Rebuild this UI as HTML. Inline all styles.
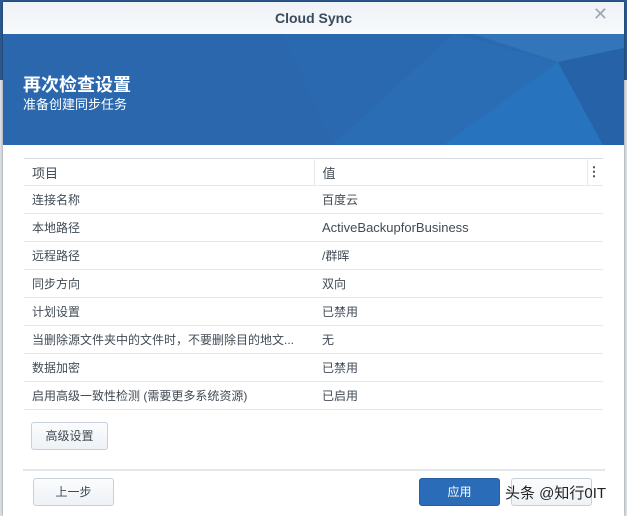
<!DOCTYPE html><html><head><meta charset="utf-8"><style>
*{margin:0;padding:0;box-sizing:border-box}
body{width:627px;height:516px;overflow:hidden;background:#dfe3e8;font-family:"Liberation Sans","Noto Sans CJK SC",sans-serif;position:relative}
.bgtop{position:absolute;left:0;top:0;width:627px;height:80px;background:#2d5a93}
.dlg{position:absolute;left:3px;top:2px;width:621px;height:514px;background:#fff;box-shadow:0 0 3px rgba(0,0,0,.4)}
.tb{height:32px;background:linear-gradient(#eef2f6,#f8fafc);text-align:center;font:bold 14px "Liberation Sans",sans-serif;color:#3a4a5c;line-height:32px;position:relative}
.x{position:absolute;right:16px;top:2px;font:300 18px "DejaVu Sans",sans-serif;color:#a0a8b0}
.ban{height:111px;position:relative;overflow:hidden;background:#2b67ad}
.ban h1{position:absolute;left:20px;top:37px;color:#fff;font-size:18px;font-weight:bold}
.ban p{position:absolute;left:20px;top:60px;color:#fff;font-size:13px}
table{position:absolute;left:21px;top:156px;width:579px;border-collapse:collapse;font-size:12px;color:#414b55}
td{height:28px;border-bottom:1px solid #e6e9ec;padding-left:8px}
tr:first-child td{border-top:1px solid #d8dde2;height:27px;font-size:13px}
.en{font-size:13px}
.b{position:absolute;border:1px solid #c7d0da;border-radius:3px;background:linear-gradient(#fbfcfd,#eef2f6);font-size:12px;color:#414b55;text-align:center}
</style></head><body>
<div class="bgtop"></div>
<div class="dlg">
<div class="tb">Cloud Sync<span class="x">✕</span></div>
<div class="ban">
<svg width="621" height="111" style="position:absolute;left:0;top:0">
<polygon points="280,0 621,0 621,111 330,111" fill="#2a69b0"/>
<polygon points="450,0 555,28 440,111 330,111" fill="#2a6db4"/>
<polygon points="470,0 621,0 621,14 555,28" fill="#3478ba" opacity=".8"/>
<polygon points="555,28 600,111 440,111" fill="#2873bd"/>
<polygon points="555,28 621,14 621,111 600,111" fill="#2562a8"/>
</svg>
<h1>再次检查设置</h1><p>准备创建同步任务</p></div>
<table>
<tr><td style="width:290px;border-right:1px solid #e6e9ec">项目</td><td style="border-right:1px solid #e6e9ec">值</td><td style="width:16px;padding:0;font-weight:bold">⋮</td></tr>
<tr><td>连接名称</td><td colspan="2">百度云</td></tr>
<tr><td>本地路径</td><td colspan="2" class="en">ActiveBackupforBusiness</td></tr>
<tr><td>远程路径</td><td colspan="2">/群晖</td></tr>
<tr><td>同步方向</td><td colspan="2">双向</td></tr>
<tr><td>计划设置</td><td colspan="2">已禁用</td></tr>
<tr><td>当删除源文件夹中的文件时，不要删除目的地文...</td><td colspan="2">无</td></tr>
<tr><td>数据加密</td><td colspan="2">已禁用</td></tr>
<tr><td>启用高级一致性检测 (需要更多系统资源)</td><td colspan="2">已启用</td></tr>
</table>
<div class="b" style="left:28px;top:420px;width:77px;height:28px;line-height:26px">高级设置</div>
<div style="position:absolute;left:20px;top:467px;width:582px;height:2px;background:#e3e7eb"></div>
<div class="b" style="left:30px;top:476px;width:81px;height:28px;line-height:26px">上一步</div>
<div class="b" style="left:416px;top:476px;width:81px;height:28px;line-height:26px;background:#2b6cb8;border-color:#255ea3;color:#fff">应用</div>
<div class="b" style="left:508px;top:476px;width:81px;height:28px"></div>
<div style="position:absolute;left:502px;top:480px;font-size:15px;color:#222">头条 @知行0IT</div>
</div>
</body></html>
